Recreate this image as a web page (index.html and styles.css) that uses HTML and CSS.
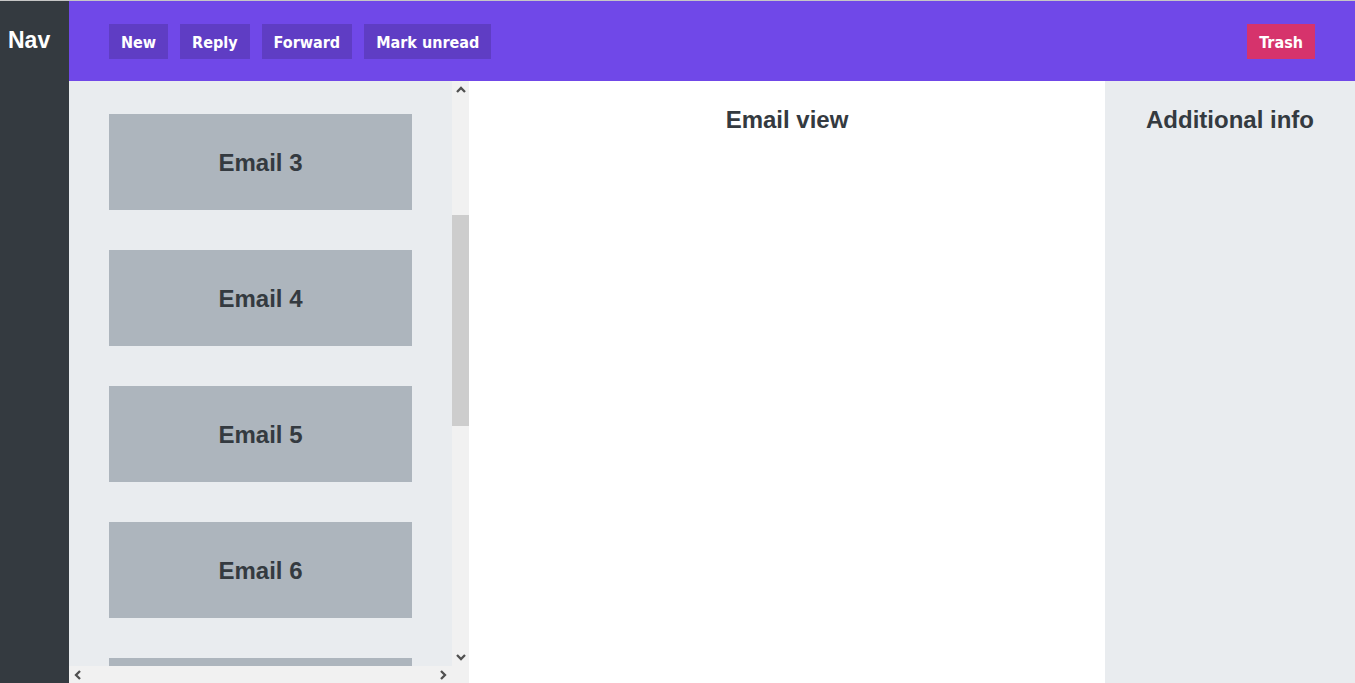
FILE: index.html
```html
<!DOCTYPE html>
<html lang="en">
<head>
<meta charset="utf-8">
<title>Mail</title>
<link rel="stylesheet" href="styles.css">
</head>
<body>
<div class="app">
  <aside class="nav">Nav</aside>
  <header class="toolbar">
    <button class="btn">New</button>
    <button class="btn">Reply</button>
    <button class="btn">Forward</button>
    <button class="btn">Mark unread</button>
    <button class="btn btn-trash">Trash</button>
  </header>
  <section class="list-wrap">
    <div class="list" id="list">
      <div class="email">Email 1</div>
      <div class="email">Email 2</div>
      <div class="email">Email 3</div>
      <div class="email">Email 4</div>
      <div class="email">Email 5</div>
      <div class="email">Email 6</div>
      <div class="email">Email 7</div>
      <div class="email">Email 8</div>
      <div class="email">Email 9</div>
      <div class="email">Email 10</div>
      <div class="email">Email 11</div>
    </div>
    <div class="vbar">
      <div class="sb-btn">
        <svg width="10" height="7" viewBox="0 0 10 7"><path d="M1 6L5 2L9 6" fill="none" stroke="#505050" stroke-width="2.3"/></svg>
      </div>
      <div class="vtrack"><div class="vthumb"></div></div>
      <div class="sb-btn">
        <svg width="10" height="7" viewBox="0 0 10 7"><path d="M1 1L5 5L9 1" fill="none" stroke="#505050" stroke-width="2.3"/></svg>
      </div>
    </div>
    <div class="hbar">
      <div class="sb-btn">
        <svg width="7" height="10" viewBox="0 0 7 10"><path d="M6 1L2 5L6 9" fill="none" stroke="#505050" stroke-width="2.3"/></svg>
      </div>
      <div class="sb-btn">
        <svg width="7" height="10" viewBox="0 0 7 10"><path d="M1 1L5 5L1 9" fill="none" stroke="#505050" stroke-width="2.3"/></svg>
      </div>
    </div>
    <div class="corner"></div>
  </section>
  <main class="view"><h2 class="panel-title">Email view</h2></main>
  <aside class="info"><h2 class="panel-title">Additional info</h2></aside>
</div>
<script src="script.js"></script>
</body>
</html>
```

FILE: styles.css
```css
* { box-sizing: border-box; }
html, body { height: 100%; }
body {
  margin: 0;
  border-top: 1px solid #c6c6c6;
  font-family: "Liberation Sans", Arial, sans-serif;
  color: #343a40;
  overflow: hidden;
}
.app {
  height: 100%;
  display: grid;
  grid-template-columns: 69px 400px 1fr 250px;
  grid-template-rows: 80px 1fr;
}
.nav {
  grid-row: 1 / 3;
  grid-column: 1;
  background: #343a40;
  color: #fff;
  font-weight: bold;
  font-size: 23px;
  padding: 26px 8px;
}
.toolbar {
  grid-column: 2 / 5;
  grid-row: 1;
  background: #7048e8;
  display: flex;
  align-items: center;
  gap: 12px;
  padding: 0 40px;
}
.btn {
  border: 0;
  margin: 0;
  background: #5f3dc4;
  color: #fff;
  font-family: "DejaVu Sans Condensed", "DejaVu Sans", sans-serif;
  font-stretch: condensed;
  font-weight: bold;
  font-size: 16px;
  line-height: 19px;
  padding: 9px 12px 7px;
}
.btn-trash {
  margin-left: auto;
  background: #d6336c;
}
.list-wrap {
  grid-column: 2;
  grid-row: 2;
  min-height: 0;
  display: grid;
  grid-template-columns: 1fr 17px;
  grid-template-rows: 1fr 17px;
}
.list {
  background: #e9ecef;
  overflow: hidden;
  padding: 40px;
  min-height: 0;
  display: flex;
  flex-direction: column;
  gap: 40px;
}
.email {
  flex: 0 0 96px;
  width: 303px;
  background: #adb5bd;
  display: flex;
  align-items: center;
  justify-content: center;
  padding-top: 2px;
  font-size: 24px;
  font-weight: bold;
  color: #343a40;
}
.vbar {
  background: #f1f1f1;
  display: flex;
  flex-direction: column;
  min-height: 0;
}
.sb-btn {
  flex: 0 0 17px;
  width: 17px;
  height: 17px;
  display: flex;
  align-items: center;
  justify-content: center;
}
.vtrack {
  flex: 1;
}
.vthumb {
  margin-top: 117px;
  height: 211px;
  background: #cdcdcd;
}
.hbar {
  background: #f1f1f1;
  display: flex;
  justify-content: space-between;
}
.corner {
  background: #f1f1f1;
}
.view {
  grid-column: 3;
  grid-row: 2;
  background: #fff;
}
.info {
  grid-column: 4;
  grid-row: 2;
  background: #e9ecef;
}
.panel-title {
  margin: 0;
  padding-top: 26px;
  text-align: center;
  font-size: 24px;
  font-weight: bold;
  line-height: 25px;
  color: #343a40;
}
```

FILE: script.js
```js
document.getElementById('list').scrollTop = 279;
```
